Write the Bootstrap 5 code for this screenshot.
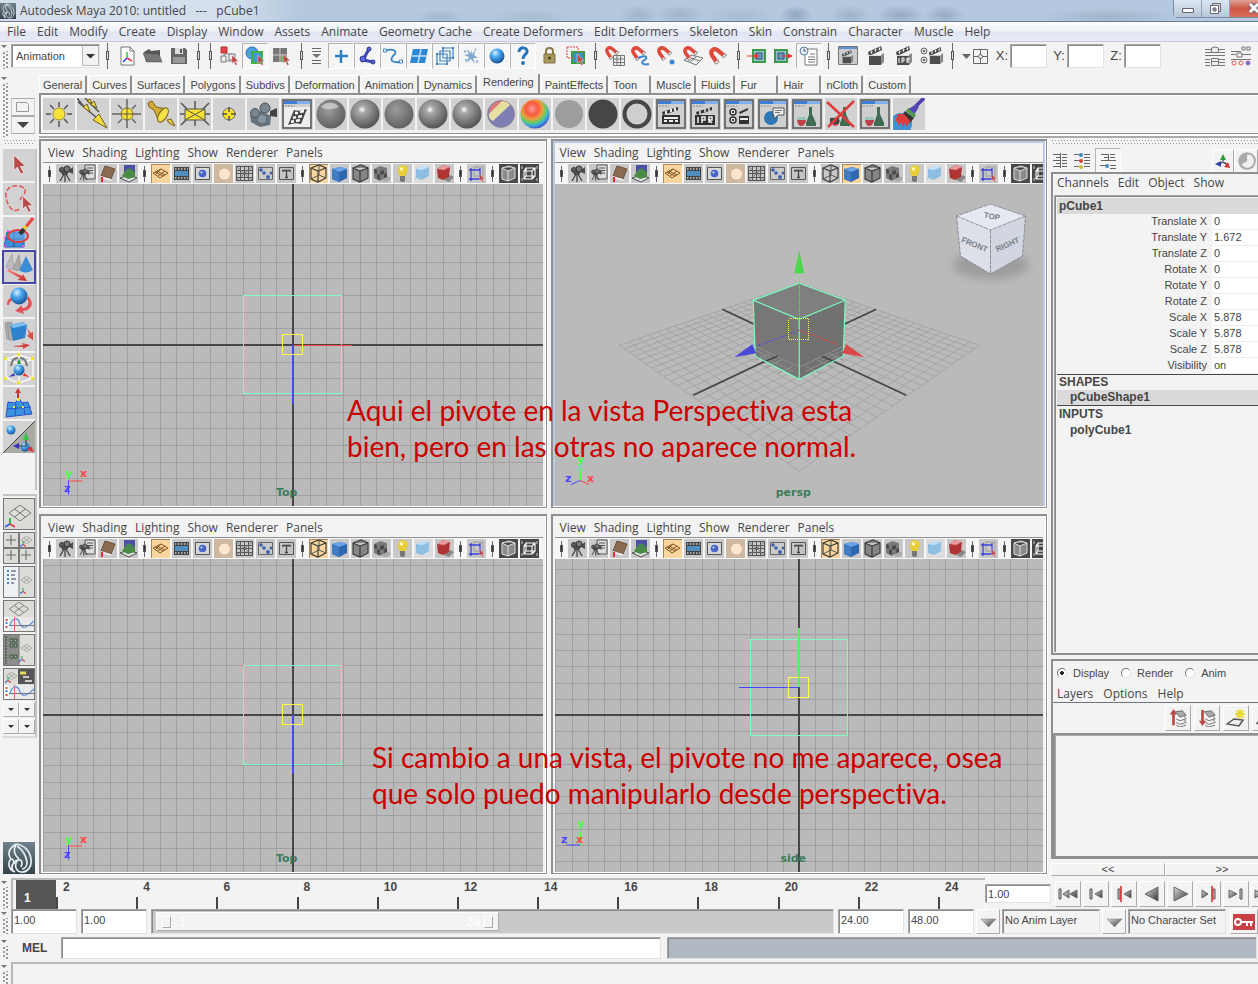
<!DOCTYPE html>
<html lang="en">
<head>
<meta charset="utf-8">
<meta name="viewport" content="width=device-width, initial-scale=1">
<title>Autodesk Maya 2010: untitled --- pCube1</title>
<link rel="stylesheet" href="https://cdn.jsdelivr.net/npm/bootstrap@5.3.0/dist/css/bootstrap.min.css">
<style>
:root{--ink:#464646;--face:#f3f3f3;--edge:#b9b9b9;--dark:#8f8f8f}
body{background:var(--face);color:var(--ink);font:11px/16px "Liberation Sans",Arial,sans-serif;overflow:hidden}
button{border:0;padding:0;background:none;color:inherit;font:inherit}
svg{display:block;flex:none}
input,select{font:inherit;color:inherit;min-width:0;border-radius:0}
.ui{font:12px/18px "Open Sans","Segoe UI",sans-serif}
.ui a{color:var(--ink);text-decoration:none;white-space:nowrap}
.inset{border:1px solid;border-color:#a8a8a8 #e2e2e2 #e2e2e2 #a8a8a8;box-shadow:inset 1px 1px 0 #8a8a8a}
.titlebar{height:22px;border-bottom:1px solid #6f7b8a;font-size:12px;white-space:pre;
 background:
 radial-gradient(ellipse 26px 8px at 440px 17px,#a3b8cd 0,transparent 100%),
 radial-gradient(ellipse 40px 8px at 530px 17px,#a8bccf 0,transparent 100%),
 radial-gradient(ellipse 20px 10px at 638px 15px,#9fb3c9 0,transparent 100%),
 radial-gradient(ellipse 26px 10px at 680px 15px,#9fb3c9 0,transparent 100%),
 radial-gradient(ellipse 34px 10px at 740px 16px,#a6bad0 0,transparent 100%),
 radial-gradient(ellipse 16px 10px at 796px 15px,#8fa5bd 0,transparent 100%),
 radial-gradient(ellipse 20px 10px at 850px 15px,#9db1c7 0,transparent 100%),
 radial-gradient(ellipse 24px 10px at 900px 15px,#96abc2 0,transparent 100%),
 radial-gradient(ellipse 20px 10px at 945px 15px,#96abc2 0,transparent 100%),
 radial-gradient(ellipse 70px 9px at 1110px 17px,#9fb3c9 0,transparent 100%),
 linear-gradient(90deg,#d5e0ec 0,#d3dfec 230px,#b4c8de 300px,#b4c9df 100%)}
.winbtns{border:1px solid #7c8ea3;border-top:0;border-right:0;border-radius:0 0 0 5px;height:18px;margin-right:-14px}
.winbtns button{width:28px;border-right:1px solid #8fa2b8;background:linear-gradient(#dce6f1,#b6c6d8)}
.winbtns button:last-child{width:42px;background:linear-gradient(#e0a399,#cf5645 50%,#d8705c)}
.menubar{height:20px;gap:11px;padding:1px 0 0 7px;border-bottom:1px solid #c6cbdc;background:linear-gradient(#fdfdfe,#eef1f8 45%,#e1e5f2 55%,#e6eaf5)}
.grip{width:11px;flex:none;padding-top:9px;background:radial-gradient(circle,#999 1px,transparent 1px) 2px 0/4px 4px repeat-y,radial-gradient(circle,#999 1px,transparent 1px) 5px 2px/4px 4px repeat-y;background-origin:content-box;background-clip:content-box}
.grip::before{content:"";display:block;margin:-6px 0 0 1px;width:0;border:3px solid transparent;border-top-color:#777}
.grip.tall{height:63px}
.statusline{height:32px;padding-bottom:5px}
.modesel{width:89px;height:24px;margin:0;padding:0 18px 0 4px;appearance:none;font-size:11px;background:#fff url("data:image/svg+xml,%3Csvg xmlns='http://www.w3.org/2000/svg' width='17' height='20'%3E%3Cpath d='M0 0H17V20H0z' fill='%23b9b9b9'/%3E%3Cpath d='M1 0H16V19H1z' fill='%23f3f3f3'/%3E%3Cpath d='M4 8h9l-4.500 4.500z' fill='%23333'/%3E%3C/svg%3E") right 0 center no-repeat}
.ib{width:26px;height:26px;display:flex;align-items:center;justify-content:center;flex:none;border:1px solid transparent}
.ib.on{border-color:#b4b4b4 #fff #fff #b4b4b4;background:#f6f6f6}
.ib.wide{width:28px}
.bar-sep{width:14px;height:26px;flex:none;background:linear-gradient(#666,#666) center/1px 100% no-repeat;display:flex;align-items:center;justify-content:center}
.bar-sep::before{content:"";width:3px;height:9px;border:1px solid #555;background:#ddd}
.bar-sep.slim{width:12px}
.inmode{padding:0 2px 0 4px}
.xyz input{width:37px;height:24px;background:#fff}
.xyz label{width:16px;text-align:center;font-size:13px}
.shelfwrap{padding-bottom:3px}
.shelftabs{height:19px;margin-left:38px;padding-top:2px;border:0;flex-wrap:nowrap;align-items:flex-end}
.shelftabs .nav-link{height:18px;padding:1px 3px 0;margin:0 1px 0 0;font:11px/15px "Liberation Sans",Arial,sans-serif;color:var(--ink);border:1px solid #fff;border-bottom:0;border-right:2px solid var(--dark);border-radius:2px 2px 0 0;background:var(--face);white-space:nowrap;text-align:left}
.shelftabs .nav-link.active{height:20px;padding:1px 4px 3px;color:var(--ink);border-color:#fff var(--dark) #fff #fff;background:var(--face)}
.shelftabs .w-s{width:42px}
.shelf{border:solid var(--dark);border-width:2px 0 1px 2px;box-shadow:inset 1px 1px 0 #fff,0 2px 0 #fff,0 4px 0 #aaa;height:41px;padding:3px 2px;gap:2px;overflow:hidden}
.tile{width:32px;height:32px;background:#d2d2d2;flex:none;overflow:hidden}
.tile.sel{outline:2px solid #4548a6;outline-offset:-1px}
.shelfpick{width:24px;height:37px;margin:5px 4px 0 0}
.shelfpick button{height:18px;border:1px solid;border-color:#aaa #ccc #aaa #ccc;display:flex;align-items:center;justify-content:center}
.toolbox{width:39px;flex:none;padding:0 4px 0 3px}
.toolgrp{gap:2px;border-right:2px solid #c4c4c4;margin-right:-2px;flex:none}
.toolgrp.paints{padding-bottom:37px}
.toolgrp.panes{margin-top:4px;border-top:2px solid #c4c4c4;padding:2px 0;border-bottom:2px solid #dcdcdc}
.hgrip{height:11px;flex:none;background:radial-gradient(circle,#999 1px,transparent 1px) 0 1px/3px 3px repeat-x,radial-gradient(circle,#999 1px,transparent 1px) 1px 4px/3px 3px repeat-x}
.layoutbtn{width:32px;height:32px;border:1px solid #777;background:#dcdcd8}
.mini{width:16px;height:15px;border:1px solid;border-color:#fff #aaa #aaa #fff;display:flex;align-items:center;justify-content:center}
.views{display:grid;grid-template-columns:507fr 496fr;grid-template-rows:370fr 360fr;gap:6px 4px;padding:1px 0 4px;min-width:0;position:relative}
.view{border:solid var(--dark);border-width:2px 1px 1px 2px;box-shadow:inset -1px -1px 0 #fff,1px 1px 0 #fff;padding:1px 3px 1px 2px;min-width:0;min-height:0;display:flex;flex-direction:column;overflow:hidden}
.view.live{background:#b7cbe3;padding-top:2px}
.view .vmenu{height:21px;gap:8px;padding:2px 5px 0;background:var(--face);border-bottom:1px solid var(--dark)}
.view.live .vmenu{height:20px;padding-top:1px}
.vtools{height:21px;padding-left:1px;background:#f6f6f6;overflow:hidden;align-items:center;flex:none}
.vtools button{width:19px;height:19px;margin:0 1px;flex:none;background:#c8c8c8;overflow:hidden}
.vtools button.on{background:#f9d69f;box-shadow:inset 1px 1px 0 #a5875a}
.vtools .bar-sep{width:11px;height:16px}
.vtools .bar-sep::before{width:3px;height:7px;background:#333}
.scene{flex:1;min-height:0;background:#bababa;position:relative}
.scene svg.world{position:absolute;inset:0;width:100%;height:100%}
.note{position:absolute;margin:0;color:#cb0000;font:28px/36px Lato,"Open Sans",sans-serif;font-variant-ligatures:none;white-space:nowrap;pointer-events:none}
.note1{left:308px;top:254px}
.note2{left:333px;top:601px}
.side{width:207px;flex:none;overflow:hidden}
.siderow{height:23px}
.frame2{border:solid var(--dark);border-width:2px 0 2px 2px}
.frame2 nav{gap:9px;height:21px}
.frame2 .layernav{gap:10px;height:18px}
.chan{border:solid #a5a5a5;border-width:1px 0 0 1px;box-shadow:inset 1px 1px 0 #888;padding:2px 0 0 2px;margin:0 0 1px 1px}
.chan table{width:100%;border-collapse:separate;border-spacing:0}
.chan th,.chan td{height:16px;padding:0;line-height:15px;font-weight:400;border-bottom:1px solid transparent}
.chan th{text-align:right;padding-right:5px;width:155px}
.chan td{background:#fff;padding-left:2px;border-bottom-color:#ececec}
.chan h2{font:bold 12px/16px "Liberation Sans",Arial,sans-serif;margin:0;padding-left:2px;height:16px}
.chan h2.shade{background:#dadada}
.chan h2.rule-t{border-top:1px solid #464646;line-height:15px}
.chan h2.rule-b{border-bottom:1px solid #464646;line-height:15px}
.chan h2.sub{padding-left:13px}
.radios{height:24px}
.radios input{appearance:none;width:10px;height:10px;border:1px solid;border-color:#777 #ddd #ddd #777;border-radius:50%;margin:0;background:#fff}
.radios input:checked{background:radial-gradient(circle,#222 2px,#fff 2px)}
.radios label{padding:0 12px 0 6px}
.rbtn{border:1px solid;border-color:#fff #aaa #aaa #fff;display:flex;align-items:center;justify-content:center;flex:none;overflow:hidden}
.layertools{gap:3px;height:30px;padding:2px 0;margin-right:-20px}
.layertools button{width:26px}
.layerlist{border:solid var(--dark);border-width:2px 0 1px 2px;box-shadow:inset 1px 1px 0 #aaa;height:124px}
.pager{height:13px;line-height:11px;margin:4px 0 2px}
.pager button{width:114px}
.timebox{border:solid #b9b9b9;border-width:2px 0 0 2px;box-shadow:1px 1px 0 #fff;height:31px;padding:0 7px 0 3px}
.timeright{width:273px}
.frm{flex:2 1 0;min-width:0;font:bold 12px/15px "Liberation Sans",Arial,sans-serif;text-indent:7px;background:linear-gradient(var(--ink),var(--ink)) 0 100%/2px 12px no-repeat}
.frm.one{flex:1 1 0}
.frm.now{background:#555;color:#fff;padding-top:11px;text-indent:8px}
.fld{width:66px;height:25px;flex:none;background:#fff;padding:0 0 4px 2px}
.fld.flat{width:98px;background:var(--face)}
.fld.now{height:19px;padding-bottom:0}
.play{gap:2px}
.play button{width:26px;height:26px}
.drop{width:24px;margin:0 2px}
.key{width:28px}
.range{height:25px;background:#c9c9c9;padding:2px 4px}
.range .thumb{width:51%;background:var(--face);border:1px solid;border-color:#fff #aaa #aaa #fff;color:#fff;padding:0 5px;font-size:13px}
.range i{width:9px;height:12px;border:1px solid;border-color:#fff #aaa #aaa #fff}
.cmdline{height:22px;margin-top:3px}
.cmdline label{width:50px;padding-left:11px;font-size:12px}
.cmdline input{flex:101 1 0}
.cmdline output{flex:100 1 0;margin:0 1px 0 6px;background:#b0b8c2}
.helpline{height:22px;margin-top:3px}
.helpline .flex-grow-1{border:solid #b9b9b9;border-width:2px 0 0 2px}
</style>
</head>
<body class="d-flex flex-column vh-100">
<svg width="0" height="0" class="position-absolute" aria-hidden="true">
<defs>
<radialGradient id="gGray" cx=".4" cy=".35" r=".65"><stop offset="0" stop-color="#fff"/><stop offset=".2" stop-color="#a8a8a8"/><stop offset=".6" stop-color="#7d7d7d"/><stop offset="1" stop-color="#555"/></radialGradient>
<radialGradient id="gMatte" cx=".4" cy=".35" r=".7"><stop offset="0" stop-color="#9c9c9c"/><stop offset="1" stop-color="#5c5c5c"/></radialGradient>
<radialGradient id="gBlue" cx=".38" cy=".3" r=".7"><stop offset="0" stop-color="#d8f1ff"/><stop offset=".4" stop-color="#4aa8ee"/><stop offset="1" stop-color="#1a569c"/></radialGradient>
<radialGradient id="gRamp" cx=".4" cy=".32" r=".72"><stop offset="0" stop-color="#ff9a9a"/><stop offset=".3" stop-color="#f55a3c"/><stop offset=".5" stop-color="#f0a040"/><stop offset=".65" stop-color="#6ccb5c"/><stop offset=".8" stop-color="#3cb0d8"/><stop offset="1" stop-color="#3a3ad0"/></radialGradient>
<linearGradient id="gTri" x1="0" y1="0" x2="1" y2="1"><stop offset="0" stop-color="#ddd"/><stop offset="1" stop-color="#333"/></linearGradient>
<linearGradient id="gLogo" x1="0" y1="0" x2="0" y2="1"><stop offset="0" stop-color="#70838d"/><stop offset="1" stop-color="#34434c"/></linearGradient>
<linearGradient id="gRed" x1="0" y1="0" x2="1" y2="1"><stop offset="0" stop-color="#ff8d85"/><stop offset="1" stop-color="#c22a2a"/></linearGradient>

<symbol id="cursor" viewBox="0 0 10 14"><path d="M1 0V11L3.500 8.500 6 13.500 8 12.500 5.700 8H9.500Z" fill="#b84a4a" stroke="#fff" stroke-width=".5"/></symbol>
<symbol id="logo" viewBox="0 0 32 32"><path fill="url(#gLogo)" d="M0 0h32v32H0z"/><g fill="none" stroke="#e9eef0" stroke-width="1.700"><path d="M13 2C6 6 4 12 8 17 4 21 6 28 12 30M13 2C21 3 27 9 28 17 29 25 24 31 18 30 12 29 11 22 15 18 19 17 20 21 18 25M13 2C10 8 11 13 16 17M14 4C20 8 23 14 24 20 24 24 22 27 19 27M8 17C10 17 11 19 11 22M10 29C8 25 9 21 14 18"/></g></symbol>
<symbol id="triad" viewBox="0 0 10 10"><path d="M5 6V0" stroke="#2fb84a" stroke-width="2"/><path d="M5 6 0 9" stroke="#3b6bdc" stroke-width="2"/><path d="M5 6 10 9" stroke="#e04040" stroke-width="2"/></symbol>
<symbol id="clap" viewBox="0 0 18 20"><path d="M1 6 14 0 15 4 2 10Z" fill="#444"/><path d="M4 7.500 5 5M8 5.500 9 3M12 4 13 1.500" stroke="#eee" stroke-width="1.500"/><path d="M2 9H14V19H2z" fill="#4d4d4d"/><path d="M14 9 17 7V16L14 19Z" fill="#888"/><path d="M2 9.500h12" stroke="#ddd"/></symbol>

<!-- status line, 20x20 -->
<symbol id="s-new" viewBox="0 0 20 20"><path d="M4 1h9l4 4v14H4z" fill="#fff" stroke="#777"/><path d="M13 1v4h4" fill="none" stroke="#777"/><path d="M10 12V6" stroke="#2ecc40" stroke-width="1.500"/><path d="M10 12 6 16" stroke="#2a3cff" stroke-width="1.500"/><path d="M10 12 15 15" stroke="#e33" stroke-width="1.500"/></symbol>
<symbol id="s-open" viewBox="0 0 20 20"><path d="M1 6 6 3 8 5 17 4V16H3Z" fill="#555"/><path d="M0 7 16 8 19 16H4Z" fill="#777" stroke="#444" stroke-width=".5"/></symbol>
<symbol id="s-save" viewBox="0 0 20 20"><path d="M2 2h14l2 2v14H2z" fill="#666"/><path d="M6 2h8v6H6z" fill="#ddd"/><path d="M11 3h2v4h-2z" fill="#555"/><path d="M4 11h12v6H4z" fill="#999"/></symbol>
<symbol id="s-hier" viewBox="0 0 20 20"><path d="M5 8v7h8M5 8h8" stroke="#888" fill="none"/><path d="M2 1h6v6H2z" fill="#e8434a" stroke="#a33"/><path d="M2 10h5v6H2zM10 8h6v6h-6z" fill="#eee" stroke="#777"/><use href="#cursor" x="12" y="9" width="8" height="11"/></symbol>
<symbol id="s-obj" viewBox="0 0 20 20"><circle cx="7" cy="7" r="6" fill="#4aa3e0" stroke="#2870a8"/><path d="M7 6h10v11H7z" fill="#3f9ad0" stroke="#42b046" stroke-width="2"/><use href="#cursor" x="12" y="9" width="8" height="11"/></symbol>
<symbol id="s-comp" viewBox="0 0 20 20"><path d="M2 2h14v14H2z" fill="#777"/><path d="M9 2v14M2 9h14" stroke="#ccc"/><path d="M10 10h6v6h-6z" fill="#5cb35c"/><use href="#cursor" x="11" y="8" width="9" height="12"/></symbol>
<symbol id="s-list" viewBox="0 0 20 20"><path d="M4 2.500h9M4 5.500h9M4 14.500h9M4 17.500h9" stroke="#666"/><path d="M4 8h9l-4.500 4z" fill="#777"/></symbol>
<symbol id="s-plus" viewBox="0 0 20 20"><path d="M10 4V17M4 10H17" stroke="#2f7fc4" stroke-width="2.500"/></symbol>
<symbol id="s-joint" viewBox="0 0 20 20"><path d="M12 3 6 14 16 16" fill="none" stroke="#3b49b5" stroke-width="3"/><g fill="#5c6ad8" stroke="#29348c"><circle cx="12" cy="3" r="2"/><circle cx="6" cy="13" r="3"/><circle cx="16" cy="16" r="2"/></g></symbol>
<symbol id="s-curve" viewBox="0 0 20 20"><path d="M2 5C10 2 16 5 10 10 6 15 10 17 18 16" fill="none" stroke="#3a84c8" stroke-width="1.800"/><path d="M.5 3h3v3h-3zM16.500 14h3v3h-3z" fill="#fff" stroke="#3a84c8"/></symbol>
<symbol id="s-surf" viewBox="0 0 20 20"><path d="M4 3H19L16 17H1Z" fill="#2d86d0"/><path d="M12 3 9 17M3 10H18" stroke="#bfe0fa" stroke-width="1.500"/></symbol>
<symbol id="s-lat" viewBox="0 0 20 20"><path d="M5 5h10v10H5zM8 2h10v10H8zM2 8h10v10H2z" fill="none" stroke="#3b82bd" stroke-width="1.200"/><path d="M7 1h2v2H7zM17 1h2v2h-2zM17 11h2v2h-2zM1 7h2v2H1zM1 17h2v2H1zM11 17h2v2h-2z" fill="#3b82bd"/></symbol>
<symbol id="s-dyn" viewBox="0 0 20 20"><path d="M10 3l1 5 4-4-2 5 4 3-5 0 2 6-4-5-5 4 3-6-5-2 5-1-3-5 5 4z" fill="#5b8fc8" opacity=".75"/><path d="M3 5l2 1M15 16l2-1M4 14h2M14 3l1 1" stroke="#8bb4de" stroke-width="2"/></symbol>
<symbol id="s-ball" viewBox="0 0 20 20"><circle cx="10" cy="10" r="7.500" fill="url(#gBlue)"/></symbol>
<symbol id="s-q" viewBox="0 0 20 20"><path d="M6 6C6 0 15 1 14 6 13 9 10 9 10 13" fill="none" stroke="#2275b8" stroke-width="3"/><circle cx="10" cy="17" r="1.900" fill="#2275b8"/></symbol>
<symbol id="s-lock" viewBox="0 0 20 20"><path d="M7 9V5C7 1 14 1 14 5V9" fill="none" stroke="#8a7a48" stroke-width="2"/><path d="M5 8h11v9H5z" fill="#a99a62" stroke="#7d7040"/><circle cx="10.500" cy="12" r="1.500" fill="#463c18"/></symbol>
<symbol id="s-hi" viewBox="0 0 20 20"><path d="M7 6h12v11H7z" fill="#3b93c8" stroke="#3a9a3e" stroke-width="2"/><path d="M2 1h11v11H2z" fill="none" stroke="#e04444" stroke-dasharray="2 1"/><use href="#cursor" x="11" y="8" width="9" height="12"/></symbol>
<symbol id="mag" viewBox="0 0 20 20"><path d="M9 17 4 10C0 4 5 0 10 4L17 10" fill="none" stroke="#e04a3a" stroke-width="4.500"/><path d="M9 17 7.500 15M17 10 15 8.300" stroke="#777" stroke-width="5"/><path d="M8.700 16.500 7.500 15M16.500 9.600 15.200 8.500" stroke="#eee" stroke-width="3.500"/></symbol>
<symbol id="s-m1" viewBox="0 0 20 20"><path d="M8.500 9.500h11v10h-11zM12 9v10M15.500 9v10M8 13h11M8 16.500h11" fill="#eee" stroke="#777"/><use href="#mag" width="15" height="15"/></symbol>
<symbol id="s-m2" viewBox="0 0 20 20"><use href="#mag" width="16" height="16"/><path d="M7 12C16 8 18 12 12 15 9 18 14 19 18 18" fill="none" stroke="#3f86d8" stroke-width="2"/></symbol>
<symbol id="s-m3" viewBox="0 0 20 20"><use href="#mag" width="16" height="16"/><circle cx="15" cy="16" r="2.500" fill="#3f86d8"/></symbol>
<symbol id="s-m4" viewBox="0 0 20 20"><path d="M1 14 8 9 20 12 13 19ZM7 16 14 10M4 11 17 15" fill="#eee" stroke="#777"/><use href="#mag" width="16" height="16"/></symbol>
<symbol id="s-m5" viewBox="0 0 20 20"><use href="#mag" x="0" y="1" width="19" height="19"/></symbol>
<symbol id="s-in" viewBox="0 0 20 20"><path d="M6 4h12v12H6z" fill="#8fc3cf" stroke="#3e9a4a" stroke-width="2"/><path d="M9 7h6v6H9z" fill="#5da3bf" stroke="#446"/><path d="M0 10H10M8 8l4 2-4 2z" stroke="#e33" fill="#e33"/></symbol>
<symbol id="s-out" viewBox="0 0 20 20"><path d="M2 4h12v12H2z" fill="#8fc3cf" stroke="#3e9a4a" stroke-width="2"/><path d="M5 7h6v6H5z" fill="#5da3bf" stroke="#446"/><path d="M8 10H18M15 8l4 2-4 2z" stroke="#e33" fill="#e33"/></symbol>
<symbol id="s-hist" viewBox="0 0 20 20"><path d="M6 3h12v16H6z" fill="#fff" stroke="#777"/><path d="M11 8h5M9 11h7M9 13.500h7M9 16h7" stroke="#777"/><circle cx="5" cy="5" r="4" fill="#e4f0fa" stroke="#5b7fa0"/><path d="M5 2.500V5H7" fill="none" stroke="#456"/></symbol>
<symbol id="s-rwin" viewBox="0 0 20 20"><path d="M.5 .5h19v18H.5z" fill="#ccc" stroke="#777"/><path d="M1 1h18v2H1z" fill="#5d8fd8"/><use href="#clap" x="3" y="4" width="13" height="14"/></symbol>
<symbol id="s-clap" viewBox="0 0 20 20"><use href="#clap" x="1" width="18" height="20"/></symbol>
<symbol id="s-ipr" viewBox="0 0 20 20"><use href="#clap" x="1" width="18" height="20"/><path d="M5 12v5M8 17v-5h2v3H8M13 17v-5h2v2h-2l2 3" stroke="#fff" fill="none"/></symbol>
<symbol id="s-rset" viewBox="0 0 24 20"><circle cx="4" cy="5" r="3" fill="#ddd" stroke="#666"/><circle cx="4" cy="14" r="3" fill="#ddd" stroke="#666"/><circle cx="4" cy="5" r="1" fill="#444"/><circle cx="4" cy="14" r="1" fill="#444"/><use href="#clap" x="8" y="0" width="16" height="20"/></symbol>
<symbol id="s-abs" viewBox="0 0 26 20"><path d="M0 8h9l-4.500 5z" fill="#666"/><path d="M11.500 3.500h14v14h-14zM18.500 3.500v14M11.500 10.500h14" fill="none" stroke="#666"/><circle cx="18.500" cy="10.500" r="2" fill="#eee" stroke="#666"/></symbol>
<symbol id="s-at1" viewBox="0 0 20 20"><path d="M0 3.500h6M14 3.500h6M0 6.500h20M0 9.500h20M0 13.500h5M14 13.500h6M0 16.500h5M14 16.500h6M0 19.500h5M14 19.500h6" stroke="#777"/><path d="M6.500 6.500V2q3.500-2 7 0v4.500zM6.500 12.500h7v7h-7zM6.500 15.500h7" fill="#eee" stroke="#777"/></symbol>
<symbol id="s-at2" viewBox="0 0 20 20"><path d="M0 5.500h10M0 8.500h5M11 8.500h9M0 13.500h20" stroke="#777"/><path d="M11 1h3v3h-3zM16 1h3v3h-3zM6 7h5v4H6z" fill="#eee" stroke="#777"/><g fill="#fff"><circle cx="3" cy="17" r="2" stroke="#d55"/><circle cx="10" cy="17" r="2" stroke="#d55"/><circle cx="17" cy="17" r="2" fill="#66d" stroke="#a6a"/></g></symbol>

<!-- shelf, 32x32 -->
<symbol id="h-point" viewBox="0 0 32 32"><path d="M16 4V9M16 23v6M3 16H8M24 16h5M7 7l4 4M25 7l-4 4M7 25l4-4M25 25l-4-4" stroke="#555" stroke-width="1.500"/><circle cx="16" cy="16" r="6" fill="#f8e238" stroke="#a09030"/></symbol>
<symbol id="h-dir" viewBox="0 0 32 32"><path d="M1 4 20 20M0 0 8 10M8 0 22 14" stroke="#555" stroke-width="1.500"/><path d="M6 9l4-3 3 8zM13 6l4-3 3 7zM10 3l3-2 2 5zM16 22l6-6 8 14z" fill="#f5dc3a" stroke="#6d6020"/></symbol>
<symbol id="h-amb" viewBox="0 0 32 32"><path d="M16 1V30M1 16H30M7 7l4 4M25 7l-4 4M7 25l4-4M25 25l-4-4" stroke="#666" stroke-width="1.500"/><circle cx="16" cy="16" r="6" fill="#f8e238" stroke="#7a6d20"/><path d="M16 10v12M10 16h12" stroke="#555"/></symbol>
<symbol id="h-spot" viewBox="0 0 32 32"><path d="M3 5 7 3 11 9 22 11 14 24 9 12 4 9Z" fill="#d2ac30" stroke="#7a6418"/><ellipse cx="18" cy="17" rx="4" ry="8" transform="rotate(32 18 17)" fill="#f6e34a" stroke="#7a6418"/><path d="M22 22l4-1 4 7-6-3z" fill="#e2c545" stroke="#7a6418"/></symbol>
<symbol id="h-area" viewBox="0 0 32 32"><path d="M2 5l6 6M30 5l-6 6M2 27l6-6M30 27l-6-6M16 3v8M16 22v6M1 16h5M26 16h5" stroke="#555" stroke-width="1.500"/><path d="M6 11h20v11H6z" fill="#f6df2e" stroke="#555"/><path d="M6 11l20 11M26 11 6 22" stroke="#555"/></symbol>
<symbol id="h-vol" viewBox="0 0 32 32"><circle cx="16" cy="16" r="6" fill="#f6df2e" stroke="#666"/><path d="M16 9v5M16 18v5M9 16h5M18 16h5" stroke="#555" stroke-width="1.500"/></symbol>
<symbol id="h-cam" viewBox="0 0 32 32"><path d="M3 17 14 13l10 5-1 9-10 2L4 24z" fill="#66727b"/><circle cx="8" cy="15" r="4.500" fill="#7a868f" stroke="#4a545c"/><circle cx="18" cy="10" r="5" fill="#7a868f" stroke="#4a545c"/><path d="M23 13l7-3v9l-7-1z" fill="#444"/><circle cx="15" cy="21" r="4" fill="#89949c"/></symbol>
<symbol id="win" viewBox="0 0 32 32"><path d="M2 2h28v28H2z" fill="#cfcfcf" stroke="#555" stroke-width="1.500"/><path d="M3 3h26v3H3z" fill="#3f7ed8"/><path d="M16 3h13v3H16z" fill="#9cc4f4" opacity=".7"/><path d="M4 8h10" stroke="#888" stroke-dasharray="2 1"/></symbol>
<symbol id="h-hyp" viewBox="0 0 32 32"><use href="#win"/><path d="M3 9h26v20H3z" fill="#eee"/><path d="M13 12q5 2 13-1l-6 15q-6-2-13 1z" fill="#444"/><path d="M14 15l3 0M19 14l4-1M12 20l3-1M17 19l4-1M10 24l3-1M15 23l4-1" stroke="#fff" stroke-width="2.500"/></symbol>
<symbol id="h-sp1" viewBox="0 0 32 32"><circle cx="16" cy="16" r="14.500" fill="url(#gMatte)"/><path d="M6 9C11 3 21 4 24 9 18 12 11 12 6 9Z" fill="#eee" opacity=".55"/></symbol>
<symbol id="h-sp2" viewBox="0 0 32 32"><circle cx="16" cy="16" r="14.500" fill="url(#gGray)"/></symbol>
<symbol id="h-sp3" viewBox="0 0 32 32"><circle cx="16" cy="16" r="14.500" fill="url(#gMatte)"/></symbol>
<symbol id="h-lay" viewBox="0 0 32 32"><circle cx="16" cy="16" r="13.500" fill="#7e7db4"/><path d="M5 9Q12 1 20 3L6 18Q3 14 5 9Z" fill="#d8797c"/><path d="M4 16 17 3Q22 2 25 7L8 23Q3 21 4 16Z" fill="#e6dfa0"/><circle cx="16" cy="16" r="13.500" fill="none" stroke="#777" stroke-opacity=".5"/></symbol>
<symbol id="h-ramp" viewBox="0 0 32 32"><circle cx="16" cy="16" r="14.500" fill="url(#gRamp)"/></symbol>
<symbol id="h-flat" viewBox="0 0 32 32"><circle cx="16" cy="16" r="14" fill="#9d9d9d"/></symbol>
<symbol id="h-blk" viewBox="0 0 32 32"><circle cx="16" cy="16" r="14.500" fill="#464646"/></symbol>
<symbol id="h-ring" viewBox="0 0 32 32"><circle cx="16" cy="16" r="12.500" fill="#cecece" stroke="#464646" stroke-width="4"/></symbol>
<symbol id="h-rw" viewBox="0 0 32 32"><use href="#win"/><path d="M7 14 23 9v3L8 17zM7 17h18v9H7z" fill="#333"/><path d="M11 13v3M16 11v3M20 10v3M9 20h14M9 23h3M14 23h4M20 23h3" stroke="#eee" stroke-width="2"/></symbol>
<symbol id="h-ri" viewBox="0 0 32 32"><use href="#win"/><path d="M7 14 23 9v3L8 17zM6 17h20v10H6z" fill="#333"/><path d="M11 13v3M16 11v3M20 10v3M9 19v6M13 25v-6h3v3h-3M20 25v-6h3v3h-3l3 3" stroke="#eee" stroke-width="1.500" fill="none"/></symbol>
<symbol id="h-rs" viewBox="0 0 32 32"><use href="#win"/><path d="M16 14 25 10v2l-8 4zM16 18h10v8H16z" fill="#333"/><path d="M17 21h8" stroke="#eee" stroke-width="2"/><g fill="#eee" stroke="#333" stroke-width="1.500"><circle cx="10" cy="14" r="3"/><circle cx="10" cy="22" r="3"/></g><circle cx="10" cy="14" r="1"/><circle cx="10" cy="22" r="1"/></symbol>
<symbol id="h-rg" viewBox="0 0 32 32"><use href="#win"/><circle cx="14" cy="20" r="7" fill="#2f76b4"/><path d="M16 10h11v7H21l-4 4v-4h-1z" fill="#eee" stroke="#555"/><path d="M18 12.500h7M18 14.500h5" stroke="#777"/></symbol>
<symbol id="flask" viewBox="0 0 32 32"><path d="M18 9h3v7l4 9v3H15v-3l3-8z" fill="#3f6b50"/><path d="M6 19h9v5q-4 5-9 0z" fill="#9cc5b4"/><path d="M6 22h9q-1 6-5 6-3 0-4-6z" fill="#c0404a"/></symbol>
<symbol id="h-fl" viewBox="0 0 32 32"><use href="#win"/><use href="#flask"/></symbol>
<symbol id="h-fx" viewBox="0 0 32 32"><use href="#flask"/><path d="M5 20h9v6H5z" fill="#444"/><path d="M2 4 29 29M29 3 3 29" stroke="#dc3c3c" stroke-width="2.500"/></symbol>
<symbol id="h-br" viewBox="0 0 32 32"><circle cx="8" cy="26" r="11" fill="#3c93cf"/><path d="M31 0 22 9" stroke="#4a3fae" stroke-width="3.500"/><path d="M24 6 15 11l6 6 5-8z" fill="#5348b4"/><path d="M15 10l8 7-2 3-8-7z" fill="#4b9a4b"/><path d="M12 13l9 7-4 5-8-8z" fill="#333"/><path d="M5 16 11 16 17 23l-3 6-2-4-2 4-2-5-2 4-2-5-2 1z" fill="#e03c3c"/></symbol>

<!-- tool box, 32x32 -->
<symbol id="t-sel" viewBox="0 0 32 32"><use href="#cursor" x="9" y="6" width="15" height="20"/></symbol>
<symbol id="t-las" viewBox="0 0 32 32"><path d="M16 26C10 32 2 20 3 10 5 1 18 1 22 6 24 11 16 16 16 19" fill="none" stroke="#e0555a" stroke-width="1.500" stroke-dasharray="5 2"/><use href="#cursor" x="18" y="13" width="13" height="17"/></symbol>
<symbol id="t-pnt" viewBox="0 0 32 32"><path d="M4 15h17v15H1z" fill="#3d8fd6" stroke="#2b5fb8"/><path d="M3 22h17M11 15v15" stroke="#1b4c98"/><ellipse cx="15" cy="19" rx="10" ry="6" fill="#7db8ea" fill-opacity=".5" stroke="#e03c3c" stroke-width="2"/><path d="M30 1 22 11" stroke="#e8443c" stroke-width="3"/><path d="M23 9l-2 3" stroke="#e8d040" stroke-width="4"/><path d="M21 12l-4 5" stroke="#333" stroke-width="4"/><path d="M1 29h2M1 21h2M4 14h2M19 29h2" stroke="#f4f" stroke-width="2"/></symbol>
<symbol id="t-mov" viewBox="0 0 32 32"><path d="M9 3 3 16q3 4 8 2z" fill="#bbb" stroke="#aaa"/><path d="M16 4 10 18q4 3 8 0z" fill="#aaa" stroke="#999"/><path d="M23 5 16 19q6 5 14 0z" fill="#3a8fd4"/><path d="M5 18 19 25 20 23 24 30 14 29 17 27 4 20Z" fill="url(#gRed)"/></symbol>
<symbol id="t-rot" viewBox="0 0 32 32"><path d="M25 11C33 19 27 26 20 26L21 29 12 26 19 20 19 23C25 23 27 17 24 14ZM4 20q0-7 6-8l1 3q-5 1-5 5z" fill="#e0555a"/><circle cx="16" cy="11" r="8.500" fill="url(#gBlue)"/></symbol>
<symbol id="t-scl" viewBox="0 0 32 32"><path d="M2 4 6 3V20H4ZM4 5 9 3V21H6Z" fill="#b5b5b5" stroke="#999"/><path d="M7 6 20 3 24 6 22 19 10 22Z" fill="#2f82cc"/><path d="M7 6 20 3 24 6 10 9Z" fill="#7dbdf0"/><path d="M24 9l4 5 2-1v8l-6-4 2-2zM11 27l9-1-1-2 8 2-7 4v-2l-9 0z" fill="url(#gRed)"/></symbol>
<symbol id="t-uni" viewBox="0 0 32 32"><path d="M16 2 30 6V25L16 30 3 25V6ZM16 2V30M3 25l13-6 14 6M3 6l13 5 14-5" fill="none" stroke="#f8f8f8" stroke-width="1.500"/><path d="M8 13q1-8 7-8M24 13q-1-8-7-8" fill="none" stroke="#777" stroke-width="2"/><circle cx="16" cy="17" r="5.500" fill="url(#gBlue)"/><path d="M16 5l2 6h-4z" fill="#2a9c3c"/><path d="M5 24l6-4 1 3z" fill="#34b"/><path d="M27 24l-6-4-1 3z" fill="#d33"/><path d="M1 4h3v3H1zM28 4h3v3h-3zM1 24h3v3H1zM28 24h3v3h-3zM14 0h3v3h-3zM14 28h3v3h-3z" fill="#f2e32c"/></symbol>
<symbol id="t-sft" viewBox="0 0 32 32"><path d="M5 15 12 16 16 11 19 16 25 15 29 27 3 30Z" fill="#3c93e0" stroke="#2b50c8"/><path d="M4 22l24-2M13 16l-1 13M20 16l2 12" stroke="#2b50c8"/><path d="M15 11V3" stroke="#c33" stroke-width="2"/><path d="M15 1l3 5h-6z" fill="#c33"/><path d="M14 11h3v3h-3zM10 19h2v2h-2zM19 19h2v2h-2z" fill="#f2e32c"/></symbol>
<symbol id="t-man" viewBox="0 0 32 32"><path d="M0 32 32 0V32z" fill="#a9aaa3"/><path d="M0 32 32 0" stroke="#444"/><circle cx="8" cy="9" r="4.500" fill="url(#gBlue)"/><circle cx="22" cy="26" r="4.500" fill="url(#gBlue)"/><path d="M23 25V16M23 25H14" stroke="#333"/><path d="M23 11l3 8h-6z" fill="#39c24a"/><path d="M10 25l6-3v6z" fill="#33b"/><path d="M31 31l-7-2 4-4z" fill="#d33"/></symbol>

<!-- layouts, 30x30 -->
<symbol id="gridp" viewBox="0 0 22 16"><path d="M11 0 22 8 11 16 0 8ZM5.500 4 16.500 12M16.500 4 5.500 12" fill="none" stroke="#777"/></symbol>
<symbol id="wave" viewBox="0 0 30 14"><path d="M0 0h30v14H0z" fill="#e9e9e9"/><path d="M0 0h5v14H0z" fill="#fff"/><path d="M2.500 2v2M2.500 9v2" stroke="#d44" stroke-width="2"/><path d="M2.500 5v2" stroke="#48d" stroke-width="2"/><path d="M5 8.500h25" stroke="#777"/><path d="M6 9C8 0 14 0 16 7 19 13 24 10 30 4" fill="none" stroke="#5b8ad0" stroke-width="1.200"/><path d="M10.500 0v14" stroke="#e66"/></symbol>
<symbol id="l-1" viewBox="0 0 30 30"><use href="#gridp" x="5" y="6" width="22" height="16"/><use href="#triad" x="1" y="19" width="10" height="10"/></symbol>
<symbol id="l-4" viewBox="0 0 30 30"><path d="M15 0v30M0 15h30" stroke="#777" stroke-width="2"/><path d="M7 2v10M2 7h10M7 17v10M2 22h10M22 17v10M17 22h10" stroke="#666"/><use href="#gridp" x="17" y="3" width="11" height="8"/><use href="#triad" x="16" y="8" width="6" height="6"/></symbol>
<symbol id="l-out" viewBox="0 0 30 30"><path d="M0 0h15v30H0z" fill="#eef2f5"/><path d="M15 0v30" stroke="#777"/><path d="M3 4h2M3 8h2M3 12h2M3 16h2" stroke="#48c" stroke-width="2"/><path d="M7 4h5M7 8h4M7 12h5M7 16h3" stroke="#778" stroke-width="1.500"/><use href="#gridp" x="17" y="9" width="11" height="8"/><use href="#triad" x="16" y="21" width="6" height="6"/></symbol>
<symbol id="l-gr" viewBox="0 0 30 30"><use href="#gridp" x="4" y="1" width="22" height="14"/><use href="#wave" y="16" width="30" height="14"/></symbol>
<symbol id="l-hs" viewBox="0 0 30 30"><path d="M0 0h15v30H0z" fill="#8a8d88"/><path d="M2 1v28" stroke="#333" stroke-dasharray="2 1"/><path d="M6 4h3v3H6zM10 4h3v3h-3zM6 9h3v3H6zM10 9h3v3h-3zM6 20h3v3H6zM10 20h3v3h-3z" fill="#aaa" stroke="#353"/><path d="M15 0v30" stroke="#777"/><use href="#gridp" x="17" y="9" width="11" height="8"/><use href="#triad" x="15" y="21" width="6" height="6"/></symbol>
<symbol id="l-hg" viewBox="0 0 30 30"><path d="M14 0h16v15H14z" fill="#555"/><path d="M16 4h6" stroke="#e5d860" stroke-width="3"/><path d="M19 8h6M21 12h7" stroke="#ccc" stroke-width="2"/><use href="#gridp" x="2" y="3" width="11" height="8"/><use href="#triad" x="1" y="8" width="6" height="6"/><use href="#wave" y="16" width="30" height="14"/></symbol>

<!-- panel tools, 19x19 -->
<symbol id="p-cam" viewBox="0 0 19 19"><path d="M8 10 4 17M9 11v7M10 10l4 7" stroke="#444" stroke-width="1.300"/><circle cx="6" cy="6" r="2.500" fill="#666" stroke="#333"/><path d="M5 6h8l4-3v7l-4-2-2 3H6z" fill="#4c4c4c"/><circle cx="11" cy="5" r="3" fill="#777" stroke="#333"/></symbol>
<symbol id="p-cat" viewBox="0 0 19 19"><path d="M8 1h10v14H8z" fill="#ddd" stroke="#555"/><path d="M10 4h6M10 6.500h6M10 9h6" stroke="#555"/><use href="#p-cam" y="3" width="14" height="15"/></symbol>
<symbol id="p-bk" viewBox="0 0 19 19"><path d="M7 2 17 5 13 15 3 12Z" fill="#8b6b50" stroke="#6a4d38"/><path d="M3 12v2l10 3 0-2" fill="#eee"/><path d="M4 13v5" stroke="#d33" stroke-width="2"/></symbol>
<symbol id="p-img" viewBox="0 0 19 19"><path d="M5 1h11v8H5z" fill="#4a50a8"/><path d="M1 14l9-3 8 3-8 4z" fill="#ddd" stroke="#555"/><path d="M3 12 8 5q4-2 8 4v4l-7 2z" fill="#4a8a48"/></symbol>
<symbol id="p-grd" viewBox="0 0 19 19"><path d="M2 9 10 5 17 9 9 14ZM6 7l8 4M10 5l-6 6M14 7l-7 5M4 8l8 4" fill="none" stroke="#84571c"/></symbol>
<symbol id="p-flm" viewBox="0 0 19 19"><path d="M2 3h15v13H2z" fill="#444"/><path d="M3 7h13v5H3z" fill="#4f8fbf"/><path d="M3 5h13M3 14h13" stroke="#ccc" stroke-width="1.500" stroke-dasharray="1.500 1.500"/></symbol>
<symbol id="p-res" viewBox="0 0 19 19"><path d="M2.500 3.500h14v12h-14z" fill="#d8d8d8" stroke="#555"/><circle cx="9.500" cy="9.500" r="3.800" fill="#4a63c8"/><circle cx="8.500" cy="8.500" r="1" fill="#cfe"/></symbol>
<symbol id="p-gate" viewBox="0 0 19 19"><path d="M0 0h19v19H0z" fill="#cfb8a0"/><circle cx="10.500" cy="10" r="5.500" fill="#fbe8cc"/></symbol>
<symbol id="p-fc" viewBox="0 0 19 19"><path d="M1.500 2.500h16v14h-16zM5.500 2.500v14M9.500 2.500v14M13.500 2.500v14M1.500 6.500h16M1.500 9.500h16M1.500 13.500h16" fill="none" stroke="#555"/><path d="M1.500 2.500l16 14M17.500 2.500l-16 14" stroke="#777"/></symbol>
<symbol id="p-act" viewBox="0 0 19 19"><path d="M2.500 3.500h14v12h-14z" fill="#ccc" stroke="#666"/><g fill="#3f62b0"><circle cx="5" cy="6" r="1.800"/><circle cx="8" cy="9" r="1.800"/><circle cx="12" cy="13" r="2"/><circle cx="15" cy="9" r="1.500"/></g></symbol>
<symbol id="p-ttl" viewBox="0 0 19 19"><path d="M2.500 3.500h14v12h-14z" fill="#c4c4c4" stroke="#555"/><path d="M6 8V6.500h7V8M9.500 6.500v7M8 13.500h3" stroke="#444" fill="none" stroke-width="1.300"/></symbol>
<symbol id="box" viewBox="0 0 19 19"><path d="M2 4 10 1 17 4V14L9 18 2 15ZM2 4l7 3 8-3M9 7V18" stroke="#3c3c3c" stroke-width="1.200"/></symbol>
<symbol id="p-wir" viewBox="0 0 19 19"><use href="#box" fill="none"/><path d="M10 1v10M2 15l8-4 7 3" fill="none" stroke="#555"/></symbol>
<symbol id="p-shd" viewBox="0 0 19 19"><path d="M2 5 10 3 17 5V14L9 18 2 15Z" fill="#2f66ac"/><path d="M2 5 10 3 17 5 9 8Z" fill="#6ba3e6"/><path d="M9 8V18L2 15V5Z" fill="#3f7cc4"/></symbol>
<symbol id="p-wos" viewBox="0 0 19 19"><use href="#box" fill="#868686"/></symbol>
<symbol id="p-tex" viewBox="0 0 19 19"><path d="M10 17 15 12 19 14 15 18z" fill="#aaa"/><path d="M2 5 8 2 15 4V13L8 17 2 14Z" fill="#7a7a7a"/><path d="M2 5l3 1v4l-3-1zM5 10l3 1v5l-3-1zM8 7l4-1v4l-4 1zM12 10l3-1v4l-3 1z" fill="#4c4c4c"/></symbol>
<symbol id="p-lit" viewBox="0 0 19 19"><path d="M7 12h5v5q-2 2-5 0z" fill="#777"/><path d="M10 1q6 0 5 6-1 3-3 5H7Q4 9 5 5 6 1 10 1Z" fill="#e6cf3a"/><circle cx="8.500" cy="5" r="1.800" fill="#fff6b0"/></symbol>
<symbol id="p-xr" viewBox="0 0 19 19"><path d="M0 0h19v19H0z" fill="#ddd"/><path d="M2 5 8 2 15 3V12L8 16 2 14Z" fill="#8ebfe2"/><path d="M2 5 8 2 15 3 8 6Z" fill="#c4e3f6"/></symbol>
<symbol id="p-red" viewBox="0 0 19 19"><path d="M9 16 15 11 19 13 14 18z" fill="#888"/><path d="M2 5 8 1 15 3 14 13 8 16 3 14Z" fill="#b03434"/><path d="M2 5 8 1 15 3 9 6Z" fill="#e89a9a"/></symbol>
<symbol id="p-iso" viewBox="0 0 19 19"><path d="M7 3h9v9H7z" fill="none" stroke="#aaa" stroke-width="1.500"/><path d="M4 6h9v9H4zM2 6h2M4 4v2M13 4v2M2 15h2M4 15v2" fill="none" stroke="#3b40e0" stroke-width="1.300"/><use href="#cursor" x="12" y="10" width="6" height="9"/></symbol>
<symbol id="p-hq" viewBox="0 0 19 19"><path d="M0 0h19v19H0z" fill="#4a4a4a"/><path d="M3 4 10 2 16 4V14L9 17 3 15ZM3 4l6 3 7-3M9 7V17" fill="#8a8a8a" stroke="#ddd"/></symbol>
<symbol id="p-bx" viewBox="0 0 19 19"><path d="M0 0h19v19H0z" fill="#464646"/><path d="M6 4h9v8H6zM4 7h8v8H4zM4 7l2-3M12 15l3-3M12 7l3-3M4 15l2-3" fill="none" stroke="#fff" stroke-width="1.100"/><path d="M2 2v3M17 2v3M2 14v3M17 14v3" stroke="#ccc"/></symbol>
<!-- side panel -->
<symbol id="c-1" viewBox="0 0 18 18"><path d="M2 2.500h7M5 5.500h4M2 8.500h7M5 11.500h4M2 14.500h7M11 2.500h5M11 5.500h5M11 8.500h5M11 11.500h5M11 14.500h5" stroke="#666"/><path d="M9.500 1v15" stroke="#666"/></symbol>
<symbol id="c-2" viewBox="0 0 18 18"><path d="M1 2.500h5M1 8.500h5M1 14.500h5M11 2.500h6M11 5.500h6M11 8.500h6M11 11.500h6M11 14.500h6" stroke="#666"/><circle cx="8" cy="3" r="2" fill="#48b"/><circle cx="8" cy="9" r="2" fill="#c44"/><circle cx="8" cy="15" r="2" fill="#cb4"/></symbol>
<symbol id="c-3" viewBox="0 0 18 18"><path d="M2 2.500h7M5 5.500h4M2 8.500h15M9.500 2v6M11 2.500h5M11 5.500h5M1 13.500h5M11 13.500h6M11 16.500h6" stroke="#666"/><circle cx="8" cy="14" r="2" fill="#48b"/></symbol>
<symbol id="c-ax" viewBox="0 0 20 20"><path d="M10 10V5M10 11 5 13M10 11l5 3" stroke="#555" stroke-width="1.500"/><path d="M10 3l3 6H7z" fill="#2a9a40"/><path d="M2 13l6-3v6z" fill="#34a"/><path d="M17 17l-6-1 4-5z" fill="#d33"/></symbol>
<symbol id="c-cl" viewBox="0 0 20 20"><circle cx="11" cy="10" r="8" fill="#a9a9a9"/><path d="M11 10V4a6 6 0 1 1-5 9z" fill="#f0f0f0"/></symbol>
<symbol id="stack" viewBox="0 0 20 20"><path d="M7 3 15 2 19 7 12 9Z" fill="#aaa" stroke="#666"/><path d="M8 11l4 2 7-2-2-3M8 15l4 2 7-2-2-3M8 18l4 2 7-2" fill="none" stroke="#666"/></symbol>
<symbol id="y-up" viewBox="0 0 20 20"><use href="#stack"/><path d="M5 0 9 6H6.500V18h-3V6H1z" fill="#b84a4a"/></symbol>
<symbol id="y-dn" viewBox="0 0 20 20"><use href="#stack"/><path d="M5 19 9 13H6.500V1h-3V13H1z" fill="#b84a4a"/></symbol>
<symbol id="y-new" viewBox="0 0 20 20"><path d="M1 16 8 11 17 12 13 18Z" fill="#eee" stroke="#555" stroke-width="1.500"/><path d="M14 1v10M9 6h10M10.500 2.500l7 7M17.500 2.500l-7 7" stroke="#e8d838" stroke-width="1.800"/></symbol>
<symbol id="y-obj" viewBox="0 0 20 20"><circle cx="8" cy="7" r="5" fill="#3f97dc"/><path d="M1 16 5 11 17 12 13 18Z" fill="#eee" stroke="#555" stroke-width="1.500"/></symbol>
<!-- playback -->
<symbol id="b-ss" viewBox="0 0 20 16"><path d="M1 3h2v10H1z" fill="#ccc" stroke="#555"/><path d="M11 4v8L5 8zM19 4v8L12 8z" fill="url(#gTri)" stroke="#666"/></symbol>
<symbol id="b-s" viewBox="0 0 20 16"><path d="M4 3h2v10H4z" fill="#ccc" stroke="#555"/><path d="M16 4v8L9 8z" fill="url(#gTri)" stroke="#666"/></symbol>
<symbol id="b-sk" viewBox="0 0 20 16"><path d="M4 3h2v10H4z" fill="#ccc" stroke="#555"/><path d="M17 4v8L10 8z" fill="url(#gTri)" stroke="#666"/><path d="M7 0v16" stroke="#d22" stroke-width="1.500"/></symbol>
<symbol id="b-pb" viewBox="0 0 20 16"><path d="M16 1v14L3 8z" fill="url(#gTri)" stroke="#666"/></symbol>
<symbol id="b-pf" viewBox="0 0 20 16"><path d="M4 1v14L18 8z" fill="url(#gTri)" stroke="#666"/></symbol>
<symbol id="b-ek" viewBox="0 0 20 16"><path d="M4 4v8L10 8z" fill="url(#gTri)" stroke="#666"/><path d="M15 3h2v10h-2z" fill="#ccc" stroke="#555"/><path d="M14 0v16" stroke="#d22" stroke-width="1.500"/></symbol>
<symbol id="b-e" viewBox="0 0 20 16"><path d="M3 4v8L11 8z" fill="url(#gTri)" stroke="#666"/><path d="M14 3h2v10h-2z" fill="#ccc" stroke="#555"/></symbol>
<symbol id="b-ee" viewBox="0 0 20 16"><path d="M1 4v8L8 8zM9 4v8L16 8z" fill="url(#gTri)" stroke="#666"/><path d="M17 3h2v10h-2z" fill="#ccc" stroke="#555"/></symbol>
<symbol id="b-dd" viewBox="0 0 20 16"><path d="M3 5h15L10.500 13z" fill="url(#gTri)" stroke="#777" stroke-width=".5"/></symbol>
<symbol id="b-key" viewBox="0 0 22 16"><path d="M0 0h22v16H0z" fill="#c94045"/><circle cx="5" cy="8" r="3" fill="none" stroke="#fff" stroke-width="2"/><path d="M8 8H20M14 8v4M18 8v4" stroke="#fff" stroke-width="2"/></symbol>
</defs>
</svg>

<header class="titlebar ui d-flex flex-shrink-0 justify-content-between">
<div class="d-flex align-items-center"><svg width="16" height="16" class="me-1"><use href="#logo"/></svg><span>Autodesk Maya 2010: untitled   ---   pCube1</span></div>
<div class="winbtns d-flex"><button aria-label="Minimize"><svg width="28" height="17"><path d="M8.500 8.500h11v4h-11z" fill="#fff" stroke="#667"/></svg></button><button aria-label="Restore"><svg width="28" height="17"><path d="M10.500 3.500h8v8h-8z" fill="#ddd" stroke="#667"/><path d="M8.500 5.500h8v8h-8z" fill="#fff" stroke="#667"/><path d="M11 8h3v3h-3z" fill="#99a" stroke="#667"/></svg></button><button aria-label="Close"><svg width="42" height="17"><path d="M20 4l8 8M28 4l-8 8" stroke="#667" stroke-width="5"/><path d="M20 4l8 8M28 4l-8 8" stroke="#fff" stroke-width="3"/></svg></button></div>
</header>
<nav class="menubar ui d-flex flex-shrink-0" id="mainmenu" aria-label="Main menu"></nav>

<div class="statusline d-flex align-items-center flex-shrink-0 overflow-hidden">
<div class="grip align-self-stretch"></div>
<select class="modesel inset" aria-label="Menu set"><option>Animation</option><option>Polygons</option><option>Rendering</option></select>
<div class="d-flex align-items-center" id="status"></div>
<div class="xyz d-flex align-items-center"><label for="fx">X:</label><input id="fx" class="inset me-1"><label for="fy">Y:</label><input id="fy" class="inset me-1"><label for="fz">Z:</label><input id="fz" class="inset"></div>
<div class="d-flex ms-auto me-1" id="statusend"></div>
</div>

<div class="d-flex flex-shrink-0">
<div class="grip tall"></div>
<div class="shelfwrap flex-grow-1 overflow-hidden">
<ul class="nav nav-tabs shelftabs ms-4 ps-1" id="tabs"></ul>
<div class="d-flex">
<div class="shelfpick d-flex flex-column"><button aria-label="Shelf tabs"><svg width="14" height="10"><path d="M.5 9.500V.5h10l2 2v7z" fill="#f3f3f3" stroke="#999"/></svg></button><button aria-label="Shelf menu"><svg width="12" height="8"><path d="M0 1h12L6 7z" fill="#444"/></svg></button></div>
<div class="shelf d-flex flex-grow-1" id="shelf"></div>
</div>
</div>
</div>

<main class="d-flex flex-grow-1 overflow-hidden">
<aside class="toolbox d-flex flex-column">
<div class="hgrip"></div>
<div class="toolgrp paints d-flex flex-column" id="tools"></div>
<div class="toolgrp panes d-flex flex-column" id="layouts"></div>
<button class="mt-auto mb-1" aria-label="Maya home"><svg width="32" height="32"><use href="#logo"/></svg></button>
</aside>

<section class="views flex-grow-1" id="views">
<p class="note note1">Aqui el pivote en la vista Perspectiva esta<br>bien, pero en las otras no aparece normal.</p>
<p class="note note2">Si cambio a una vista, el pivote no me aparece, osea<br>que solo puedo manipularlo desde perspectiva.</p>
</section>

<aside class="side d-flex flex-column ms-1">
<div class="hgrip"></div>
<div class="siderow d-flex align-items-center flex-shrink-0">
<button class="rbtn border-0" aria-label="Channel box"><svg width="18" height="18"><use href="#c-1"/></svg></button>
<button class="rbtn border-0 mx-1" aria-label="Layer editor"><svg width="18" height="18"><use href="#c-2"/></svg></button>
<button class="ib on" aria-label="Channel box and layers"><svg width="18" height="18"><use href="#c-3"/></svg></button>
<button class="rbtn ms-auto" aria-label="Manipulator"><svg width="20" height="22"><use href="#c-ax"/></svg></button>
<button class="rbtn" aria-label="Speed"><svg width="22" height="22"><use href="#c-cl"/></svg></button>
</div>
<div class="frame2 d-flex flex-column flex-grow-1">
<nav class="ui d-flex px-1"><a href="#">Channels</a><a href="#">Edit</a><a href="#">Object</a><a href="#">Show</a></nav>
<div class="chan flex-grow-1">
<h2 class="shade">pCube1</h2>
<table><tbody id="chans"></tbody></table>
<h2 class="rule-t">SHAPES</h2>
<h2 class="shade sub rule-b">pCubeShape1</h2>
<h2>INPUTS</h2>
<h2 class="sub">polyCube1</h2>
</div>
</div>
<div class="frame2 mt-1 flex-shrink-0">
<div class="radios d-flex align-items-center px-1">
<input type="radio" name="lay" id="r1" checked><label for="r1">Display</label>
<input type="radio" name="lay" id="r2"><label for="r2">Render</label>
<input type="radio" name="lay" id="r3"><label for="r3">Anim</label>
</div>
<nav class="layernav ui d-flex px-1 border-bottom border-secondary"><a href="#">Layers</a><a href="#">Options</a><a href="#">Help</a></nav>
<div class="layertools d-flex justify-content-end">
<button class="rbtn" aria-label="Move layer up"><svg width="18" height="20"><use href="#y-up"/></svg></button>
<button class="rbtn" aria-label="Move layer down"><svg width="18" height="20"><use href="#y-dn"/></svg></button>
<button class="rbtn" aria-label="New layer"><svg width="20" height="20"><use href="#y-new"/></svg></button>
<button class="rbtn" aria-label="New layer from selection"><svg width="18" height="20"><use href="#y-obj"/></svg></button>
</div>
<div class="layerlist"></div>
</div>
<div class="pager d-flex flex-shrink-0"><button class="rbtn">&lt;&lt;</button><button class="rbtn">&gt;&gt;</button></div>
</aside>
</main>

<div class="d-flex flex-shrink-0 overflow-hidden">
<div class="grip"></div>
<div class="timebox d-flex flex-grow-1" id="timeline"></div>
<div class="timeright d-flex align-items-center">
<input class="fld now inset" value="1.00" aria-label="Current time">
<div class="play d-flex ms-1 flex-shrink-0" id="play"></div>
</div>
</div>
<div class="d-flex flex-shrink-0 overflow-hidden">
<div class="grip"></div>
<input class="fld inset" value="1.00" aria-label="Animation start"><input class="fld inset ms-1" value="1.00" aria-label="Playback start">
<div class="range inset flex-grow-1 mx-1"><div class="thumb d-flex align-items-center h-100"><i></i><span class="ms-2">1</span><span class="ms-auto me-1">24</span><i></i></div></div>
<input class="fld inset" value="24.00" aria-label="Playback end"><input class="fld inset ms-1" value="48.00" aria-label="Animation end">
<button class="rbtn drop" aria-label="Anim layer menu"><svg width="20" height="16"><use href="#b-dd"/></svg></button><input class="fld flat inset" value="No Anim Layer" aria-label="Anim layer" readonly>
<button class="rbtn drop" aria-label="Character menu"><svg width="20" height="16"><use href="#b-dd"/></svg></button><input class="fld flat inset" value="No Character Set" aria-label="Character set" readonly>
<button class="rbtn key ms-1" aria-label="Auto key"><svg width="22" height="16"><use href="#b-key"/></svg></button>
</div>
<div class="cmdline d-flex flex-shrink-0">
<div class="grip"></div>
<label for="mel" class="fw-bold align-self-center">MEL</label>
<input id="mel" class="inset bg-white">
<output class="inset"></output>
</div>
<footer class="helpline d-flex flex-shrink-0"><div class="grip"></div><div class="flex-grow-1"></div></footer>

<script>
const $ = id => document.getElementById(id);
const icon = (id, s, w) => `<svg width="${w || s}" height="${s}"><use href="#${id}"/></svg>`;
$('mainmenu').innerHTML = 'File,Edit,Modify,Create,Display,Window,Assets,Animate,Geometry Cache,Create Deformers,Edit Deformers,Skeleton,Skin,Constrain,Character,Muscle,Help'
  .split(',').map(t => `<a href="#">${t}</a>`).join('');

// Status line: "!" marks a pressed button.
const sep = '<span class="bar-sep"></span>', slim = '<span class="bar-sep slim"></span>';
const btn = t => { const on = t[0] === '!'; const id = t.replace('!', '');
  return `<button class="ib${on ? ' on' : ''}" aria-label="${id}">${icon(id, 20)}</button>`; };
const row = s => s.split(' ').map(btn).join('');
$('status').innerHTML = sep + row('s-new s-open s-save') + slim + slim
  + row('s-hier !s-obj s-comp') + sep
  + '<button aria-label="Mask list">' + icon('s-list', 20) + '</button>'
  + row('!s-plus !s-joint !s-curve !s-surf !s-lat !s-dyn !s-ball !s-q s-lock s-hi') + sep
  + row('s-m1 s-m2 s-m3 s-m4 s-m5') + slim + row('s-in s-out !s-hist') + slim
  + row('s-rwin s-clap s-ipr').replace(/class="ib"/g, 'class="ib wide"')
  + '<button class="ib wide" aria-label="Render settings">' + icon('s-rset', 20, 24) + '</button>' + slim
  + '<button class="inmode me-1" aria-label="Input mode">' + icon('s-abs', 20, 26) + '</button>';
$('statusend').innerHTML = row('s-at1 s-at2');

$('tabs').innerHTML = 'General,Curves,Surfaces,Polygons,Subdivs,Deformation,Animation,Dynamics,Rendering,PaintEffects,Toon,Muscle,Fluids,Fur,Hair,nCloth,Custom'
  .split(',').map(t => `<li class="nav-item"><button class="nav-link${t === 'Rendering' ? ' active' : ''}${/Toon|Fur|Hair/.test(t) ? ' w-s' : ''}">${t}</button></li>`).join('');
const tiles = (s, sel) => s.split(' ').map(t => `<button class="tile${t === sel ? ' sel' : ''}" aria-label="${t}">${icon(t, 32)}</button>`).join('');
$('shelf').innerHTML = tiles('h-point h-dir h-amb h-spot h-area h-vol h-cam h-hyp h-sp1 h-sp2 h-sp3 h-sp2 h-sp2 h-lay h-ramp h-flat h-blk h-ring h-rw h-ri h-rs h-rg h-fl h-fx h-fl h-br');
$('tools').innerHTML = tiles('t-sel t-las t-pnt t-mov t-rot t-scl t-uni t-sft t-man', 't-mov');
$('layouts').innerHTML = 'l-1 l-4 l-out l-gr l-hs l-hg'.split(' ').map(t => `<button class="layoutbtn" aria-label="${t}">${icon(t, 30)}</button>`).join('')
  + ('<div class="d-flex">' + '<button class="mini" aria-label="Panel menu"><svg width="6" height="4"><path d="M0 0h6L3 3z" fill="#333"/></svg></button>'.repeat(2) + '</div>').repeat(2);

$('chans').innerHTML = [['Translate X', 0], ['Translate Y', 1.672], ['Translate Z', 0], ['Rotate X', 0], ['Rotate Y', 0], ['Rotate Z', 0], ['Scale X', 5.878], ['Scale Y', 5.878], ['Scale Z', 5.878], ['Visibility', 'on']]
  .map(([k, v]) => `<tr><th>${k}</th><td>${v}</td></tr>`).join('');

let tl = '<div class="frm one now">1</div>';
for (let f = 2; f <= 24; f += 2) tl += `<div class="frm${f === 24 ? ' one' : ''}">${f}</div>`;
$('timeline').innerHTML = tl;
$('play').innerHTML = 'b-ss b-s b-sk b-pb b-pf b-ek b-e b-ee'.split(' ').map(t => `<button class="rbtn" aria-label="${t}">${icon(t, 16, 20)}</button>`).join('');

// Orthographic grid around the origin of the panel.
function ortho(step) {
  let d = '';
  for (let i = -30; i <= 30; i++) { const p = Math.round(i * step) + .5; d += `M${p} -400V400M-600 ${p}H600`; }
  return `<path d="${d}" stroke="#a0a0a0" shape-rendering="crispEdges"/><path d="M0 -400V400M-600 0H600" stroke="#464646" stroke-width="2" shape-rendering="crispEdges"/>`;
}
// Ground plane seen through the perspective camera.
const pt = (u, v) => { const s = u + v, t = u - v, w = 1 - .17 * s; return (90 * t / w).toFixed(1) + ' ' + (41.6 * s / w).toFixed(1); };
function ground() {
  let d = '';
  for (let i = -12; i <= 12; i++) { const k = i / 12; d += `M${pt(k, -1)}L${pt(k, 1)}M${pt(-1, k)}L${pt(1, k)}`; }
  return `<path d="${d}" stroke="#a0a0a0" fill="none" stroke-width=".8"/>`;
}
const G = '#7dfbc0', Y = '#ffff46', B = '#4646ff', R = '#ff4646', N = '#46ff46';
const mid = s => `<svg x="50%" y="50%" overflow="visible">${s}</svg>`;
const low = s => `<svg x="0" y="100%" overflow="visible" font-family="DejaVu Sans, sans-serif" font-weight="bold" font-size="11">${s}</svg>`;
const name = t => `<svg x="50%" y="100%" overflow="visible"><text x="-6" y="-10" text-anchor="middle" font-family="DejaVu Sans, sans-serif" font-weight="bold" font-size="11" fill="#3f7a5a">${t}</text></svg>`;
const topGiz = `<path d="M25 -25.500H39" stroke="${R}"/><path d="M25.500 -26V-12" stroke="${B}"/><text x="22" y="-29" fill="${N}">y</text><text x="37" y="-29" fill="${R}">x</text><text x="21" y="-14" fill="${B}">z</text>`;
const crisp = 'fill="none" shape-rendering="crispEdges"';
const scenes = [
  mid(ortho(16.65) + `<g ${crisp}><path d="M-49.500 -49.500H48.500V48.500H-49.500Z" stroke="${G}"/><path d="M0 .5H59" stroke="${R}"/><path d="M0 0V59" stroke="${B}" stroke-width="2"/><path d="M-10.500 -10.500H9.500V9.500H-10.500Z" stroke="${Y}"/></g>`) + low(topGiz) + name('Top'),
  mid(ground() + `<g fill="none" stroke="#464646" stroke-width="1.800"><path d="M-77 -36 0 0M77 -36 0 0M-106 50 0 0M107 50 0 0"/></g>
   <path d="M0-62 46-45 44 11 0 34-44 11-46-45Z" fill="#777"/><path d="M0-62 46-45 0-26-46-45Z" fill="#7f7f7f"/><path d="M0-26 46-45 44 11 0 34Z" fill="#717171"/>
   <path d="M-44 5-22 15M-44 1 0 22M-40 10-6 26M44 5 22 15M44 1 0 22M40 10 6 26M-30 9-44 15M-18 15-34 22M-6 21-22 28M30 9 44 15M18 15 34 22M6 21 22 28" stroke="#909090"/>
   <path d="M-36 17-22 11M36 17 23 11" stroke="#464646" stroke-width="1.800"/>
   <path d="M0-62 46-45 44 11 0 34-44 11-46-45ZM-46-45 0-26 46-45M0-26V34" fill="none" stroke="${G}" stroke-width="1.200"/>
   <g fill="none" stroke-dasharray="1 1" shape-rendering="crispEdges"><path d="M.5-72V-15" stroke="${N}"/><path d="M0-15-43 1" stroke="${B}"/><path d="M0-15 43 1" stroke="${R}"/><path d="M-10.500-26.500H9.500V-5.500H-10.500Z" stroke="${Y}"/></g>
   <path d="M0-95 5-72H-5Z" fill="#4bd84b"/><path d="M-65 12-47-1-43 8Z" fill="#4848d8"/><path d="M65 12 47-1 43 8Z" fill="#dc4848"/>`)
  + `<svg x="100%" y="0" overflow="visible"><g transform="translate(-244 161)"><ellipse cx="191" cy="-80" rx="38" ry="14" fill="#666" opacity=".35" filter="blur(4px)"/>
   <path d="M157-129 191-115V-71L161-89Z" fill="#dde0e8"/><path d="M226-129 191-115V-71L223-89Z" fill="#d2d6e0"/><path d="M191-141 226-129 191-115 157-129Z" fill="#e6e9f2"/>
   <path d="M157-129 191-115 226-129 191-141ZM191-115V-71M157-129 161-89 191-71 223-89 226-129" fill="none" stroke="#7c8088" stroke-dasharray="4 1" stroke-width=".8"/>
   <g font-family="Liberation Sans, sans-serif" font-size="8" font-weight="bold" fill="#7a7e86" text-anchor="middle"><text transform="translate(174 -98) rotate(22)">FRONT</text><text transform="translate(209 -98) rotate(-24)">RIGHT</text><text transform="translate(192 -126) rotate(10)">TOP</text></g></g></svg>`
  + low(`<path d="M25.500 -27V-39" stroke="${N}"/><path d="M25 -26 16 -22" stroke="${B}"/><path d="M25 -26 34 -22" stroke="${R}"/><text x="22" y="-43" fill="${N}">y</text><text x="10" y="-24" fill="${B}">z</text><text x="32" y="-24" fill="${R}">x</text>`) + name('persp'),
  mid(ortho(16.65) + `<g ${crisp}><path d="M-49.500 -49.500H48.500V49.500H-49.500Z" stroke="${G}"/><path d="M0 0V59" stroke="${B}" stroke-width="2"/><path d="M-10.500 -10.500H9.500V9.500H-10.500Z" stroke="${Y}"/></g>`) + low(topGiz) + name('Top'),
  mid(ortho(16.25) + `<g ${crisp}><path d="M-48.500 -75.500H48.500V20.500H-48.500Z" stroke="${G}"/><path d="M-.5 -87V-28" stroke="${N}" stroke-width="2"/><path d="M-60 -27.500H0" stroke="${B}"/><path d="M-10.500 -37.500H9.500V-17.500H-10.500Z" stroke="${Y}"/></g>`)
  + low(`<path d="M11 -26.500H25" stroke="${B}"/><path d="M25.500 -26V-40" stroke="${N}"/><text x="22" y="-45" fill="${N}">y</text><text x="6" y="-29" fill="${B}">z</text><text x="21" y="-29" fill="${R}">x</text>`) + name('side')
];
const vsets = ['p-cam p-cat p-bk p-img', 'p-grd p-flm p-res p-gate p-fc p-act p-ttl', 'p-wir p-shd p-wos p-tex p-lit p-xr p-red', 'p-iso', 'p-hq p-bx'];
scenes.forEach((sc, i) => {
  const lit = i === 1 ? 'p-shd' : 'p-wir';
  const tools = vsets.map(g => sep + g.split(' ').map(t => `<button class="${t === 'p-grd' || t === lit ? 'on' : ''}" aria-label="${t}">${icon(t, 19)}</button>`).join('')).join('');
  $('views').insertAdjacentHTML('beforeend', `<article class="view${i === 1 ? ' live' : ''}"><nav class="vmenu ui d-flex flex-shrink-0">${'View,Shading,Lighting,Show,Renderer,Panels'.split(',').map(t => `<a href="#">${t}</a>`).join('')}</nav><div class="vtools d-flex">${tools}</div><div class="scene"><svg class="world">${sc}</svg></div></article>`);
});
document.querySelectorAll('.note').forEach(n => $('views').append(n));
</script>
<script src="https://cdn.jsdelivr.net/npm/bootstrap@5.3.0/dist/js/bootstrap.bundle.min.js"></script>
</body>
</html>
